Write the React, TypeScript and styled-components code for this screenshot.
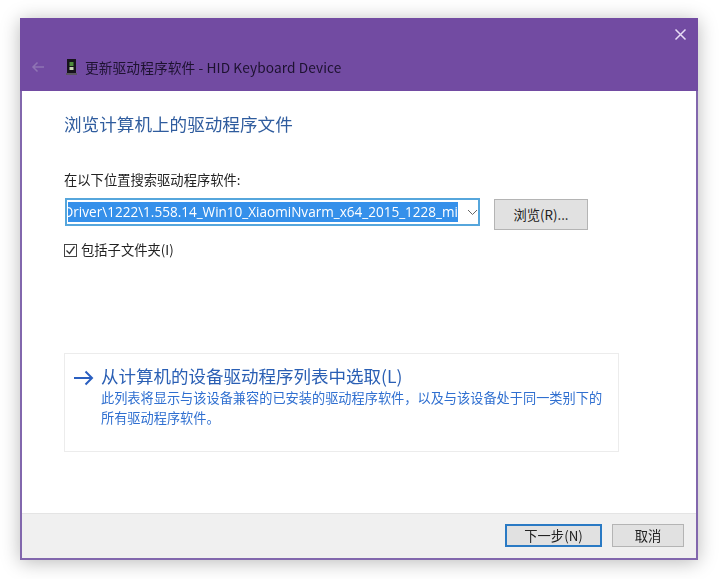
import React from "react";
import styled, { createGlobalStyle } from "styled-components";

const Global = createGlobalStyle`
  html, body { margin: 0; padding: 0; background: #fff; }
  body { width: 720px; height: 579px; overflow: hidden; font-family: "Noto Sans CJK SC", "Liberation Sans", sans-serif; }
`;
const Stage = styled.div`
  width: 720px; height: 579px; padding: 18px 0 0 20px; box-sizing: border-box; filter: blur(0.45px);
`;
const Dialog = styled.div`
  width: 678px; height: 542px; box-sizing: border-box; display: flex; flex-direction: column;
  border: 2px solid #8267ad; border-top: 0; background: #fff;
  box-shadow: 0 2px 18px rgba(0,0,0,.28);
`;
const TitleBar = styled.div`
  height: 73px; flex: none; margin: 0 -2px; background: #724ba2; box-sizing: border-box;
  display: flex; flex-direction: column; padding: 10px 11px 0 11px;
`;
const CloseRow = styled.div`
  display: flex; justify-content: flex-end; height: 14px;
`;
const NavRow = styled.div`
  display: flex; align-items: center; margin-top: 14px; height: 22px;
`;
const AppIcon = styled.svg`
  margin-left: 21px; margin-right: 8px; flex: none;
`;
const TitleText = styled.span`
  font-size: 13.7px; color: #1d1230; letter-spacing: 0.1px; white-space: nowrap;
  font-family: "Noto Sans CJK SC", sans-serif;
`;
const Body = styled.div`
  flex: 1; display: flex; flex-direction: column; padding: 21px 0 0 42px; min-height: 0;
`;
const Heading = styled.h1`
  margin: 0; font-size: 17.6px; line-height: 24px; font-weight: 400; color: #2f5c9e; white-space: nowrap;
`;
const FieldLabel = styled.div`
  margin-top: 35px; font-size: 13.3px; line-height: 18px; color: #222; white-space: nowrap;
`;
const FieldRow = styled.div`
  display: flex; align-items: flex-start; margin-top: 9px; margin-left: 1px;
`;
const Combo = styled.div`
  width: 415px; height: 28px; box-sizing: border-box; border: 2px solid #56a6dc; display: flex; align-items: stretch; background: #fff;
`;
const Selected = styled.div`
  width: 390px; margin: 2px 0 2px 1px; background: #3590ea; color: #fff; font-family: "Open Sans", "Liberation Sans", sans-serif;
  font-size: 13.55px; line-height: 20px; white-space: nowrap; overflow: hidden; display: flex; justify-content: flex-end;
`;
const Chevron = styled.svg`
  margin: 9px 0 0 9px; flex: none;
`;
const Button = styled.button<{ $primary?: boolean; $w: number; $h: number }>`
  width: ${p => p.$w}px; height: ${p => p.$h}px; box-sizing: border-box; padding: 0 0 1px;
  background: #e1e1e1; color: #222; font-family: inherit; font-size: 13.3px;
  border: ${p => (p.$primary ? "2px solid #2a7ac4" : "1px solid #b4b4b4")};
  display: flex; align-items: center; justify-content: center; white-space: nowrap;
`;
const BrowseButton = styled(Button)`
  margin: 1px 0 0 14px;
`;
const CheckRow = styled.label`
  display: flex; align-items: center; gap: 4px; margin-top: 13px; font-size: 13.3px; line-height: 14px; color: #222; white-space: nowrap;
`;
const CheckBox = styled.span`
  width: 13px; height: 13px; box-sizing: border-box; border: 1px solid #444; display: flex; align-items: center; justify-content: center; background: #fff;
`;
const CommandLink = styled.div`
  margin-top: 96px; width: 555px; height: 99px; box-sizing: border-box; border: 1px solid #ececec;
  display: flex; padding: 10px 0 0 8px;
`;
const ArrowIcon = styled.svg`
  flex: none; margin: 6px 7px 0 0;
`;
const LinkText = styled.div`
  display: flex; flex-direction: column;
`;
const LinkTitle = styled.div`
  font-size: 17.5px; line-height: 24px; color: #2a5fb4; white-space: nowrap;
`;
const LinkDesc = styled.div`
  width: 510px; font-size: 13.2px; line-height: 20px; color: #2f6fd0;
`;
const Footer = styled.div`
  height: 45px; flex: none; background: #f0f0f0; border-top: 1px solid #e4e4e4; box-sizing: border-box;
  display: flex; justify-content: flex-end; align-items: flex-start; gap: 10px; padding: 10px 12px 0 0;
`;

export default function App() {
  return (
    <>
      <Global />
      <Stage>
        <Dialog>
          <TitleBar>
            <CloseRow>
              <svg width="13" height="13" viewBox="0 0 13 13">
                <path d="M1.5 1.5l10 10M11.5 1.5l-10 10" stroke="#e8dcf6" strokeWidth="1.5" fill="none" />
              </svg>
            </CloseRow>
            <NavRow>
              <svg width="14" height="12" viewBox="0 0 14 12">
                <path d="M13 6H2M6.5 1.5L2 6l4.5 4.5" stroke="#8f74b4" strokeWidth="1.5" fill="none" />
              </svg>
              <AppIcon width="11" height="16" viewBox="0 0 11 16">
                <rect x="1" y="0" width="9" height="14" fill="#17131c" />
                <rect x="3.5" y="3" width="4" height="4" fill="#4f8d3d" />
                <rect x="3.5" y="8" width="4" height="3" fill="#c8d6b5" />
                <rect x="0" y="14" width="11" height="2" fill="#5a5560" />
              </AppIcon>
              <TitleText>更新驱动程序软件 - HID Keyboard Device</TitleText>
            </NavRow>
          </TitleBar>
          <Body>
            <Heading>浏览计算机上的驱动程序文件</Heading>
            <FieldLabel>在以下位置搜索驱动程序软件:</FieldLabel>
            <FieldRow>
              <Combo>
                <Selected>Driver\1222\1.558.14_Win10_XiaomiNvarm_x64_2015_1228_mi</Selected>
                <Chevron width="11" height="7" viewBox="0 0 11 7">
                  <path d="M1 1l4.5 4.5L10 1" stroke="#666" strokeWidth="1" fill="none" />
                </Chevron>
              </Combo>
              <BrowseButton $w={94} $h={31}>浏览(R)...</BrowseButton>
            </FieldRow>
            <CheckRow>
              <CheckBox>
                <svg width="11" height="11" viewBox="0 0 11 11">
                  <path d="M1.5 5.5l3 3 5-7" stroke="#333" strokeWidth="1.3" fill="none" />
                </svg>
              </CheckBox>
              包括子文件夹(I)
            </CheckRow>
            <CommandLink>
              <ArrowIcon width="21" height="16" viewBox="0 0 21 16">
                <path d="M1 8h18M12.5 1.5L19 8l-6.5 6.5" stroke="#2a5fc0" strokeWidth="2" fill="none" />
              </ArrowIcon>
              <LinkText>
                <LinkTitle>从计算机的设备驱动程序列表中选取(L)</LinkTitle>
                <LinkDesc>此列表将显示与该设备兼容的已安装的驱动程序软件，以及与该设备处于同一类别下的所有驱动程序软件。</LinkDesc>
              </LinkText>
            </CommandLink>
          </Body>
          <Footer>
            <Button $primary $w={97} $h={23}>下一步(N)</Button>
            <Button $w={72} $h={23}>取消</Button>
          </Footer>
        </Dialog>
      </Stage>
    </>
  );
}
